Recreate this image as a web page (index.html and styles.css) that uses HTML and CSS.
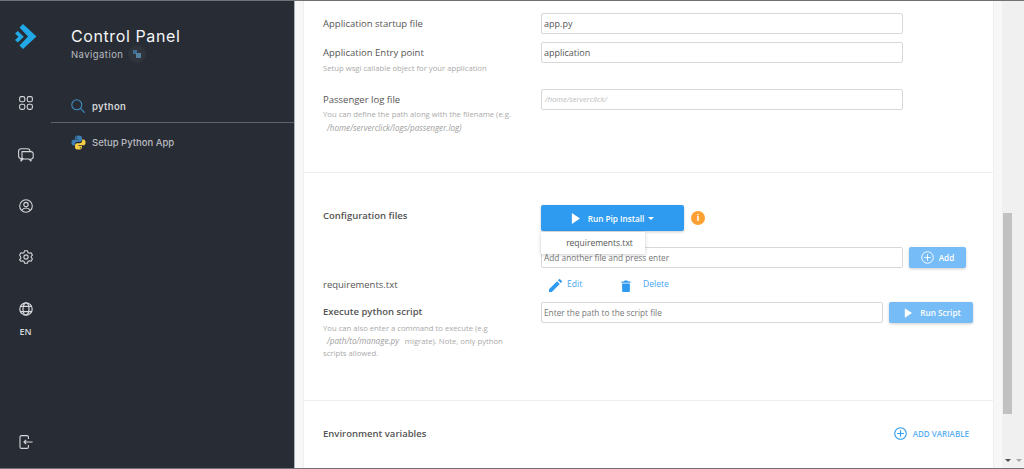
FILE: index.html
```html
<!DOCTYPE html>
<html lang="en">
<head>
<meta charset="utf-8">
<title>Control Panel</title>
<link rel="stylesheet" href="styles.css">
</head>
<body>
<div class="app">
  <aside class="rail">
    <svg class="logo" viewBox="0 0 22 25" width="22" height="25"><path fill="#21a8e6" d="M8 0 21.500 12.500 8 25 4.500 21.500 13 12.500 4.500 3.500z"/><path fill="#21a8e6" d="M0 9.500 2.800 7 8.800 12.800 2.800 18.500 0 16 3.400 12.800z"/></svg>
    <svg class="ri ri-first" viewBox="0 0 14 14" width="14" height="14"><g fill="none" stroke="#d5d7da" stroke-width="1.1"><rect x=".6" y=".6" width="5.2" height="5.2" rx="1.8"/><rect x="8.2" y=".6" width="5.2" height="5.2" rx="1.8"/><rect x=".6" y="8.2" width="5.2" height="5.2" rx="1.8"/><rect x="8.2" y="8.2" width="5.2" height="5.2" rx="1.8"/></g></svg>
    <svg class="ri ri-wide" viewBox="0 0 16 14" width="16" height="14"><g fill="none" stroke="#d5d7da" stroke-width="1.1" stroke-linejoin="round"><path d="M4 10.500H3A2.400 2.400 0 0 1 .6 8.100V3.200A2.400 2.400 0 0 1 3 .8h6.500A2.400 2.400 0 0 1 12 3v.6"/><path d="M4 3.600h9a2.200 2.200 0 0 1 2.200 2.200v3A2.200 2.200 0 0 1 13 11v2l-2-2H6a2 2 0 0 1-2-2z"/><path d="M3 10.500V13l2-2"/></g></svg>
    <svg class="ri" viewBox="0 0 14 14" width="14" height="14"><g fill="none" stroke="#d5d7da" stroke-width="1.1"><circle cx="7" cy="7" r="6.300"/><circle cx="7" cy="5.600" r="2.200"/><path d="M2.800 11.400c1-1.700 2.400-2.400 4.200-2.400s3.200.7 4.200 2.400"/></g></svg>
    <svg class="ri" viewBox="0 0 14 14" width="14" height="14"><g fill="none" stroke="#d5d7da" stroke-width="1.1" stroke-linejoin="round"><path d="M5.600.7h2.800l.5 1.700 1.500.8 1.700-.5 1.300 2.400-1.200 1.300v1.200l1.200 1.300-1.300 2.400-1.700-.5-1.500.8-.5 1.700H5.600l-.5-1.700-1.500-.8-1.700.5L.6 9.700l1.200-1.300V7.200L.6 5.100l1.300-2.400 1.700.5 1.500-.8z"/><circle cx="7" cy="7" r="2.100"/></g></svg>
    <svg class="ri ri-globe" viewBox="0 0 14 14" width="14" height="14"><g fill="none" stroke="#d5d7da" stroke-width="1.2"><circle cx="7" cy="7" r="6.200"/><ellipse cx="7" cy="7" rx="3" ry="6.200"/><path d="M1.400 4.400h11.200M1.400 9.600h11.200"/></g></svg>
    <span class="lang">EN</span>
    <svg class="ri ri-exit" viewBox="0 0 14 14" width="14" height="14"><g fill="none" stroke="#d5d7da" stroke-width="1.1" stroke-linejoin="round"><path d="M9.400 4V2A1.400 1.400 0 0 0 8 .6H2.400A1.400 1.400 0 0 0 1 2v10a1.400 1.400 0 0 0 1.400 1.400H8A1.400 1.400 0 0 0 9.400 12v-2"/><path d="M13.600 7H5M7.200 4.800 5 7l2.200 2.200"/></g></svg>
  </aside>

  <nav class="nav">
    <header class="nav-head">
      <h1 class="nav-title">Control Panel</h1>
      <div class="nav-sub"><span>Navigation</span><span class="nav-badge"><svg viewBox="0 0 8 8" width="8" height="8"><path fill="#3f6f96" d="M0 0h4v4H0z"/><path fill="#55819f" d="M3 3h5v5H3z"/></svg></span></div>
    </header>
    <div class="nav-search">
      <svg viewBox="0 0 14 14" width="14" height="14"><g fill="none" stroke="#3d8fc4" stroke-width="1.1"><circle cx="5.800" cy="5.800" r="5"/><path d="m9.400 9.400 4 4" stroke-linecap="round"/></g></svg>
      <span>python</span>
    </div>
    <div class="nav-item">
      <svg viewBox="0 0 16 16" width="15" height="15"><path fill="#3d7fb5" d="M8 .5c-3 0-3.600 1-3.600 2.200V4.400H8.200V5H2.800C1.300 5 .5 6.200.5 8.100s.9 3.100 2.300 3.100h1.300V9.500c0-1.300 1.100-2.400 2.400-2.400h3.200c1.100 0 2-.9 2-2V2.700C11.700 1.300 10.300.5 8 .5zM6 1.600a.7.7 0 1 1 0 1.400.7.7 0 0 1 0-1.400z"/><path fill="#f6cf45" d="M8 15.500c3 0 3.600-1 3.600-2.200v-1.700H7.800V11h5.400c1.500 0 2.300-1.200 2.300-3.100s-.9-3.100-2.300-3.100h-1.300v1.700c0 1.300-1.100 2.400-2.400 2.400H6.300c-1.100 0-2 .9-2 2v2.400c0 1.400 1.400 2.200 3.700 2.200zm2-1.100a.7.7 0 1 1 0-1.400.7.7 0 0 1 0 1.400z"/></svg>
      <span>Setup Python App</span>
    </div>
  </nav>

  <main class="main">
    <div class="card">
      <section class="sec sec-app">
        <div class="row row-a">
          <div class="lbl">Application startup file</div>
          <div class="ctl"><div class="input">app.py</div></div>
        </div>
        <div class="row row-b">
          <div class="lbl">Application Entry point<p class="hint">Setup wsgi callable object for your application</p></div>
          <div class="ctl"><div class="input">application</div></div>
        </div>
        <div class="row row-c">
          <div class="lbl">Passenger log file<p class="hint"><span class="line">You can define the path along with the filename (e.g.</span><span class="line"><em class="path">/home/serverclick/logs/passenger.log)</em></span></p></div>
          <div class="ctl"><div class="input ph ital">/home/serverclick/</div></div>
        </div>
      </section>

      <section class="sec sec-conf">
        <div class="row row-conf">
          <div class="lbl strong">Configuration files</div>
          <div class="ctl ctl-inline">
            <div class="pip-wrap">
              <button class="btn btn-pip"><svg viewBox="0 0 10 12" width="9" height="11"><path fill="#fff" d="M1 0l9 6-9 6z"/></svg><span>Run Pip Install</span><i class="caret"></i></button>
              <div class="menu">requirements.txt</div>
            </div>
            <span class="info">i</span>
          </div>
        </div>
        <div class="row row-add">
          <div class="lbl"></div>
          <div class="ctl ctl-inline ctl-gap">
            <div class="input ph-dark">Add another file and press enter</div>
            <button class="btn btn-light btn-add"><svg viewBox="0 0 14 14" width="13" height="13"><g fill="none" stroke="#fff" stroke-width="1"><circle cx="7" cy="7" r="6.200"/><path d="M7 3.600v6.800M3.600 7h6.800"/></g></svg><span>Add</span></button>
          </div>
        </div>
        <div class="row row-file">
          <div class="lbl">requirements.txt</div>
          <div class="ctl file-acts">
            <a class="act act-edit"><svg viewBox="0 0 14 14" width="13" height="13"><path fill="#2e9af0" d="M0 14v-3L8.600 2.400l3 3L3 14zM9.600 1.400 10.800.2a.8.8 0 0 1 1.100 0l1.900 1.900a.8.8 0 0 1 0 1.100l-1.200 1.200z"/></svg><span>Edit</span></a>
            <a class="act act-del"><svg viewBox="0 0 10 13" width="10" height="12"><path fill="#2e9af0" d="M0 1.500h2.800L3.500.5h3l.7 1H10V3H0zM.8 3.800h8.400V12a1 1 0 0 1-1 1H1.800a1 1 0 0 1-1-1z"/></svg><span>Delete</span></a>
          </div>
        </div>
        <div class="row row-exec">
          <div class="lbl strong">Execute python script<p class="hint"><span class="line">You can also enter a command to execute (e.g</span><span class="line"><em class="path">/path/to/manage.py</em><span>migrate). Note, only python</span></span><span class="line">scripts allowed.</span></p></div>
          <div class="ctl ctl-inline ctl-gap">
            <div class="input input-short ph-dark">Enter the path to the script file</div>
            <button class="btn btn-light btn-run"><svg viewBox="0 0 10 12" width="8" height="10"><path fill="#fff" d="M1 0l9 6-9 6z"/></svg><span>Run Script</span></button>
          </div>
        </div>
      </section>

      <section class="sec sec-env">
        <div class="env-label">Environment variables</div>
        <a class="add-var"><svg viewBox="0 0 14 14" width="13" height="13"><g fill="none" stroke="#2e9af0" stroke-width="1.200"><circle cx="7" cy="7" r="6.200"/><path d="M7 3.400v7.200M3.400 7h7.200"/></g></svg><span>ADD VARIABLE</span></a>
      </section>
    </div>
    <div class="scrollbar">
      <div class="thumb"></div>
      <div class="arrows"><i class="arr arr-dark"></i><i class="arr"></i></div>
    </div>
  </main>
</div>
</body>
</html>
```
FILE: styles.css
```css
* { box-sizing: border-box; }
html, body { margin: 0; height: 100%; overflow: hidden; }
body { font-family: "Open Sans", "Liberation Sans", sans-serif; color: #555; background: #fff; }
.app { display: flex; height: 469px; border-top: 1px solid #6f7175; border-bottom: 1px solid #6f7175; }

.rail { width: 51px; flex: none; background: #282c34; display: flex; flex-direction: column; align-items: center; }
.logo { margin: 23px 0 0 0; }
.ri { display: block; margin-top: 37px; }
.ri-first { margin-top: 47px; }
.ri-wide { margin-top: 38px; }
.ri-globe { margin-top: 38px; }
.lang { font-size: 9px; font-weight: 600; color: #d5d7da; margin-top: 10px; line-height: 12px; }
.ri-exit { margin-top: 97px; }

.nav { width: 244px; flex: none; background: #282c34; border-right: 1px solid #a9b1bd; color: #fff; font-family: Inter, "Noto Sans", sans-serif; }
.nav-head { padding: 26px 0 0 20px; }
.nav-title { margin: 0; font-size: 16px; font-weight: 400; line-height: 19px; letter-spacing: .6px; color: #f4f5f6; }
.nav-sub { display: flex; align-items: center; margin-top: -1px; font-size: 9.500px; letter-spacing: .45px; color: #b8bbc1; line-height: 13px; }
.nav-badge { display: flex; align-items: center; justify-content: center; width: 18px; height: 18px; margin-left: 5px; border-radius: 50%; background: #2f343d; }
.nav-search { display: flex; align-items: center; gap: 7px; height: 33px; margin-top: 27px; padding: 0 0 0 20px; border-bottom: 1px solid #5d616c; font-size: 9.500px; font-weight: 600; letter-spacing: .3px; color: #d4d6d9; }
.nav-item { display: flex; align-items: center; gap: 6px; margin-top: 12px; padding-left: 20px; font-size: 9.500px; font-weight: 500; color: #b8bbc1; }

.main { flex: 1; display: flex; background: #f7f7f7; padding-left: 8px; min-width: 0; }
.card { width: 691px; flex: none; background: #fff; border: 1px solid #efefef; border-width: 0 1px; }
.scrollbar { width: 22px; margin-left: 8px; background: #f0f0f0; display: flex; flex-direction: column; padding-top: 212px; padding-left: 1px; }
.thumb { width: 9px; height: 201px; background: #c1c1c1; }
.arrows { display: flex; gap: 5px; margin-top: 45px; margin-left: 2px; }
.arr { width: 0; height: 0; border: 3px solid transparent; border-top: 3px solid #a8a8a8; border-bottom: 0; }
.arr-dark { border-top-color: #505050; }

.sec { padding-left: 19px; border-bottom: 1px solid #efefef; }
.sec-app { height: 172px; padding-top: 12px; }
.sec-conf { height: 228px; padding-top: 32px; }
.sec-env { border: 0; display: flex; justify-content: space-between; align-items: center; padding: 26px 24px 0 19px; }

.row { display: flex; }
.lbl { width: 218px; flex: none; font-size: 9.500px; line-height: 13px; color: #555; }
.strong { font-weight: 600; }
.ctl { flex: none; }
.ctl-inline { display: flex; align-items: flex-start; }
.ctl-gap { gap: 6px; }
.hint { margin: 3px 0 0; width: 195px; font-size: 7.700px; line-height: 13px; font-weight: 400; color: #aaa; }
.row-c .hint { margin-top: 2px; }
.row-exec .hint { margin-top: 4px; line-height: 12.500px; }
.line { display: block; white-space: nowrap; }
.path { font-style: italic; font-size: 8.100px; font-weight: 400; padding: 0 6px 0 4px; color: #a0a0a0; }

.input { width: 362px; height: 21px; border: 1px solid #d8d8d8; border-radius: 2px; padding: 0 2px; font-size: 9px; line-height: 19px; color: #555; background: #fff; }
.input-short { width: 342px; }
.ph { color: #bbb; padding-left: 3px; font-size: 7.600px; }
.ital { font-style: italic; }
.ph-dark { color: #777; font-size: 8.300px; }

.row-a { height: 29px; }
.row-a .lbl { padding-top: 4px; }
.row-b { height: 47px; }
.row-b .lbl { padding-top: 4px; }
.row-c .lbl { padding-top: 4px; }
.row-conf { height: 42px; }
.row-conf .lbl { padding-top: 4px; }
.pip-wrap { position: relative; }
.btn { border: 0; border-radius: 2px; color: #fff; font-family: inherit; font-size: 8.200px; font-weight: 600; display: flex; align-items: center; justify-content: center; padding: 0; box-shadow: 0 1px 3px rgba(0,0,0,.2); }
.btn-pip { width: 143px; height: 26px; background: #2e9af0; gap: 8px; }
.caret { width: 0; height: 0; margin-left: -4px; border: 3.500px solid transparent; border-top: 3.500px solid #fff; border-bottom: 0; }
.menu { position: absolute; left: 0; top: 27px; width: 104px; height: 22px; padding-left: 13px; background: #fff; box-shadow: 0 1px 4px rgba(0,0,0,.2); font-size: 8.500px; line-height: 22px; text-align: center; color: #555; z-index: 2; }
.info { width: 14px; height: 14px; margin: 6px 0 0 7px; border-radius: 50%; background: #fda033; color: #fff; font-size: 9px; line-height: 14px; text-align: center; font-weight: 700; }
.btn-light { background: #76bcf6; height: 21px; }
.btn-add { width: 57px; gap: 5px; }
.btn-run { width: 84px; gap: 8px; padding-left: 3px; }
.row-file { height: 34px; align-items: flex-start; padding-top: 11px; }
.row-file .lbl { margin-top: -1px; }
.file-acts { display: flex; font-size: 8.600px; color: #44a6f3; }
.act { display: flex; align-items: center; gap: 5px; height: 13px; }
.act-edit { width: 72px; margin-left: 8px; }
.act-del { gap: 12px; }
.act span { position: relative; top: -1.500px; }
.row-exec .lbl { padding-top: 3px; }
.env-label { font-size: 9.500px; font-weight: 600; color: #555; }
.add-var { display: flex; align-items: center; gap: 6px; font-size: 8px; font-weight: 600; color: #5bb0f4; }
```
